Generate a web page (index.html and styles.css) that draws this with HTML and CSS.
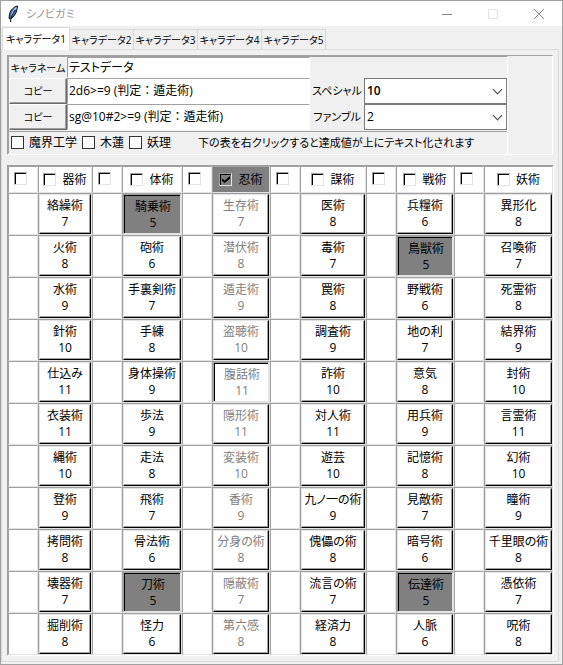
FILE: index.html
```html
<!DOCTYPE html>
<html lang="ja">
<head>
  <meta charset="UTF-8">
  <title>シノビガミ</title>
  <link rel="stylesheet" href="styles.css">
</head>
<body>

  <div class="window">
    <header class="titlebar">
      <svg class="feather" viewBox="0 0 12 18" aria-hidden="true">
        <path d="M10.500 1C7 1.500 3.500 5 2.500 9L2 13.500 3.500 14C7 12 9.500 8 10 4.500Z" fill="#3d6a9c" stroke="#111a2b" stroke-width="1"/>
        <path d="M9.500 2.500C7.500 4 5.500 7 4.500 10.500" fill="none" stroke="#a9cdf0" stroke-width="1.500"/>
        <path d="M8 5C6 8 4 11 3.500 17" fill="none" stroke="#111" stroke-width="1"/>
      </svg>
      <h1 class="title">シノビガミ</h1>
      <div class="controls">
        <button class="control" aria-label="最小化"><svg viewBox="0 0 12 12"><path d="M1 6.500H11" stroke="#888"/></svg></button>
        <button class="control" aria-label="最大化" disabled><svg viewBox="0 0 12 12"><path d="M1.500 1.500H10.500V10.500H1.500Z" stroke="#e2e2e2"/></svg></button>
        <button class="control" aria-label="閉じる"><svg viewBox="0 0 12 12"><path d="M1 1L11 11M11 1L1 11" stroke="#888"/></svg></button>
      </div>
    </header>

    <nav class="tabs" role="tablist">
      <button class="tab" role="tab" aria-selected="true">キャラデータ1</button>
      <button class="tab" role="tab" aria-selected="false">キャラデータ2</button>
      <button class="tab" role="tab" aria-selected="false">キャラデータ3</button>
      <button class="tab" role="tab" aria-selected="false">キャラデータ4</button>
      <button class="tab" role="tab" aria-selected="false">キャラデータ5</button>
    </nav>

    <main class="pane">
      <form class="profile">
        <div class="profile-inner">
          <div class="fields">
            <label class="name-label" for="name">キャラネーム</label>
            <input class="entry" id="name" type="text" value="テストデータ">
            <span></span>
            <span></span>
            <button class="copy" type="button">コピー</button>
            <input class="entry formula" type="text" value="2d6&gt;=9 (判定：遁走術)" aria-label="判定式">
            <label class="combo-label" for="special">スペシャル</label>
            <div class="combo"><select class="combo-bold" id="special"><option>10</option><option>11</option><option>12</option></select></div>
            <button class="copy" type="button">コピー</button>
            <input class="entry formula" type="text" value="sg@10#2&gt;=9 (判定：遁走術)" aria-label="コマンド">
            <label class="combo-label" for="fumble">ファンブル</label>
            <div class="combo"><select id="fumble"><option>2</option><option>3</option><option>4</option></select></div>
          </div>
          <div class="options">
            <label class="option"><input class="check" type="checkbox">魔界工学</label>
            <label class="option"><input class="check" type="checkbox">木蓮</label>
            <label class="option"><input class="check" type="checkbox">妖理</label>
            <span class="hint">下の表を右クリックすると達成値が上にテキスト化されます</span>
          </div>
        </div>
      </form>

      <table class="skills">
        <colgroup>
          <col class="gap"><col class="c1"><col class="gap"><col class="c2"><col class="gap"><col class="c3">
          <col class="gap"><col class="c4"><col class="gap"><col class="c5"><col class="gap"><col class="c6">
        </colgroup>
        <thead>
          <tr>
            <th><input class="box" type="checkbox" aria-label="妖術と器術の間"></th>
            <th><label class="field"><input class="box" type="checkbox">器術</label></th>
            <th><input class="box" type="checkbox" aria-label="器術と体術の間"></th>
            <th><label class="field"><input class="box" type="checkbox">体術</label></th>
            <th><input class="box" type="checkbox" aria-label="体術と忍術の間"></th>
            <th class="lost"><label class="field"><input class="box" type="checkbox" checked>忍術</label></th>
            <th><input class="box" type="checkbox" aria-label="忍術と謀術の間"></th>
            <th><label class="field"><input class="box" type="checkbox">謀術</label></th>
            <th><input class="box" type="checkbox" aria-label="謀術と戦術の間"></th>
            <th><label class="field"><input class="box" type="checkbox">戦術</label></th>
            <th><input class="box" type="checkbox" aria-label="戦術と妖術の間"></th>
            <th><label class="field"><input class="box" type="checkbox">妖術</label></th>
          </tr>
        </thead>
        <tbody>
          <tr>
            <td></td><td><button class="skill">絡繰術<br>7</button></td>
            <td></td><td><button class="skill learned">騎乗術<br>5</button></td>
            <td></td><td><button class="skill" disabled>生存術<br>7</button></td>
            <td></td><td><button class="skill">医術<br>8</button></td>
            <td></td><td><button class="skill">兵糧術<br>6</button></td>
            <td></td><td><button class="skill">異形化<br>8</button></td>
          </tr>
          <tr>
            <td></td><td><button class="skill">火術<br>8</button></td>
            <td></td><td><button class="skill">砲術<br>6</button></td>
            <td></td><td><button class="skill" disabled>潜伏術<br>8</button></td>
            <td></td><td><button class="skill">毒術<br>7</button></td>
            <td></td><td><button class="skill learned">鳥獣術<br>5</button></td>
            <td></td><td><button class="skill">召喚術<br>7</button></td>
          </tr>
          <tr>
            <td></td><td><button class="skill">水術<br>9</button></td>
            <td></td><td><button class="skill">手裏剣術<br>7</button></td>
            <td></td><td><button class="skill" disabled>遁走術<br>9</button></td>
            <td></td><td><button class="skill">罠術<br>8</button></td>
            <td></td><td><button class="skill">野戦術<br>6</button></td>
            <td></td><td><button class="skill">死霊術<br>8</button></td>
          </tr>
          <tr>
            <td></td><td><button class="skill">針術<br>10</button></td>
            <td></td><td><button class="skill">手練<br>8</button></td>
            <td></td><td><button class="skill" disabled>盗聴術<br>10</button></td>
            <td></td><td><button class="skill">調査術<br>9</button></td>
            <td></td><td><button class="skill">地の利<br>7</button></td>
            <td></td><td><button class="skill">結界術<br>9</button></td>
          </tr>
          <tr>
            <td></td><td><button class="skill">仕込み<br>11</button></td>
            <td></td><td><button class="skill">身体操術<br>9</button></td>
            <td></td><td><button class="skill sunken" disabled>腹話術<br>11</button></td>
            <td></td><td><button class="skill">詐術<br>10</button></td>
            <td></td><td><button class="skill">意気<br>8</button></td>
            <td></td><td><button class="skill">封術<br>10</button></td>
          </tr>
          <tr>
            <td></td><td><button class="skill">衣装術<br>11</button></td>
            <td></td><td><button class="skill">歩法<br>9</button></td>
            <td></td><td><button class="skill" disabled>隠形術<br>11</button></td>
            <td></td><td><button class="skill">対人術<br>11</button></td>
            <td></td><td><button class="skill">用兵術<br>9</button></td>
            <td></td><td><button class="skill">言霊術<br>11</button></td>
          </tr>
          <tr>
            <td></td><td><button class="skill">縄術<br>10</button></td>
            <td></td><td><button class="skill">走法<br>8</button></td>
            <td></td><td><button class="skill" disabled>変装術<br>10</button></td>
            <td></td><td><button class="skill">遊芸<br>10</button></td>
            <td></td><td><button class="skill">記憶術<br>8</button></td>
            <td></td><td><button class="skill">幻術<br>10</button></td>
          </tr>
          <tr>
            <td></td><td><button class="skill">登術<br>9</button></td>
            <td></td><td><button class="skill">飛術<br>7</button></td>
            <td></td><td><button class="skill" disabled>香術<br>9</button></td>
            <td></td><td><button class="skill">九ノ一の術<br>9</button></td>
            <td></td><td><button class="skill">見敵術<br>7</button></td>
            <td></td><td><button class="skill">瞳術<br>9</button></td>
          </tr>
          <tr>
            <td></td><td><button class="skill">拷問術<br>8</button></td>
            <td></td><td><button class="skill">骨法術<br>6</button></td>
            <td></td><td><button class="skill" disabled>分身の術<br>8</button></td>
            <td></td><td><button class="skill">傀儡の術<br>8</button></td>
            <td></td><td><button class="skill">暗号術<br>6</button></td>
            <td></td><td><button class="skill">千里眼の術<br>8</button></td>
          </tr>
          <tr>
            <td></td><td><button class="skill">壊器術<br>7</button></td>
            <td></td><td><button class="skill learned">刀術<br>5</button></td>
            <td></td><td><button class="skill" disabled>隠蔽術<br>7</button></td>
            <td></td><td><button class="skill">流言の術<br>7</button></td>
            <td></td><td><button class="skill learned">伝達術<br>5</button></td>
            <td></td><td><button class="skill">憑依術<br>7</button></td>
          </tr>
          <tr>
            <td></td><td><button class="skill">掘削術<br>8</button></td>
            <td></td><td><button class="skill">怪力<br>6</button></td>
            <td></td><td><button class="skill" disabled>第六感<br>8</button></td>
            <td></td><td><button class="skill">経済力<br>8</button></td>
            <td></td><td><button class="skill">人脈<br>6</button></td>
            <td></td><td><button class="skill">呪術<br>8</button></td>
          </tr>
        </tbody>
      </table>
    </main>
  </div>

</body>
</html>
```
FILE: styles.css
```css
:root {
  --face: #f0f0f0;
  --shadow: #a0a0a0;
  --light: #e3e3e3;
  --dark: #808080;
}

* {
  box-sizing: border-box;
}

body {
  background: var(--face);
  color: #000;
  font: 12px/16px "Open Sans", "Noto Sans CJK JP", sans-serif;
  font-feature-settings: "palt";
  margin: 0;
}

button,
input,
select {
  color: inherit;
  font: inherit;
  font-feature-settings: inherit;
  margin: 0;
}

.window {
  border: 1px solid var(--shadow);
  display: flex;
  flex-direction: column;
  min-height: 100vh;
}

/* Title bar */
.titlebar {
  align-items: center;
  background: #fff;
  display: flex;
  height: 25px;
  padding-left: 6px;
}

.feather {
  height: 18px;
  width: 12px;
}

.title {
  color: #999;
  flex: 1;
  font-size: 11px;
  font-weight: 400;
  margin: 0 0 0 7px;
}

.controls {
  display: flex;
}

.control {
  background: none;
  border: 0;
  display: grid;
  height: 24px;
  padding: 0;
  place-items: center;
  width: 46px;
}

.control svg {
  fill: none;
  height: 12px;
  width: 12px;
}

/* Tabs */
.tabs {
  align-items: flex-end;
  display: flex;
  height: 23px;
  padding-left: 1px;
}

.tab {
  background: var(--face);
  border: 1px solid #d9d9d9;
  border-bottom: 0;
  border-left: 0;
  flex: 0 0 64px;
  font-size: 10px;
  height: 20px;
  padding: 0;
  white-space: nowrap;
}

.tab[aria-selected="true"] {
  background: #fff;
  border-left: 1px solid #d9d9d9;
  flex-basis: 68px;
  height: 23px;
  margin-bottom: -1px;
  z-index: 1;
}

.pane {
  border: 1px solid #dcdcdc;
  flex: 1;
  margin: 0 3px 2px 0;
  padding: 5px;
}

/* Character form */
.profile {
  border: 1px solid;
  border-color: var(--shadow) #fff #fff var(--shadow);
  margin-bottom: 10px;
}

.profile-inner {
  border: 1px solid;
  border-color: var(--shadow) #fff var(--face) var(--shadow);
  margin-right: 44px;
}

.fields {
  align-items: stretch;
  display: grid;
  grid-template-columns: 58px 1fr 54px 143px;
  grid-template-rows: 21px 26px 26px;
}

.name-label,
.combo-label {
  align-self: center;
  font-size: 11px;
  text-align: center;
  white-space: nowrap;
}

.name-label {
  font-size: 10px;
}

.entry {
  background: #fff;
  border: 1px solid;
  border-color: var(--shadow) #fff #fff var(--shadow);
  min-width: 0;
  padding: 0 1px;
}

.formula {
  font-feature-settings: normal;
}

.copy {
  background: var(--face);
  border: 1px solid;
  border-color: #fff #696969 #696969 #fff;
  box-shadow: inset -1px -1px var(--shadow);
  font-size: 10px;
  padding: 0;
}

.combo {
  display: grid;
  position: relative;
}

.combo select {
  appearance: none;
  background: #fff;
  border: 1px solid #7a7a7a;
  border-radius: 0;
  padding: 0 2px;
}

.combo .combo-bold {
  font-weight: 600;
}

.combo::after {
  border: solid #444;
  border-width: 0 1px 1px 0;
  content: "";
  height: 6px;
  pointer-events: none;
  position: absolute;
  right: 6px;
  top: 8px;
  transform: rotate(45deg);
  width: 6px;
}

.options {
  align-items: center;
  border-top: 1px solid var(--shadow);
  display: flex;
  gap: 5px;
  height: 22px;
  margin-top: 1px;
  padding-left: 2px;
}

.option {
  align-items: center;
  display: flex;
  gap: 5px;
}

.check {
  appearance: none;
  background: #fff;
  border: 1px solid #333;
  height: 13px;
  width: 13px;
}

.hint {
  font-size: 11px;
  margin-left: 22px;
}

/* Skill table */
.skills {
  background: #fff;
  border: 1px solid;
  border-color: var(--shadow) #fff #fff var(--shadow);
  border-spacing: 0;
  table-layout: fixed;
  width: 100%;
}

.gap { width: 30px; }
.c1 { width: 54px; }
.c2 { width: 60px; }
.c3 { width: 58px; }
.c4 { width: 66px; }
.c5 { width: 58px; }
.c6 { width: 69px; }

.skills th,
.skills td {
  border: 1px solid;
  border-color: var(--shadow) var(--light) var(--light) var(--shadow);
  font-weight: 400;
  padding: 0;
}

.skills th {
  height: 27px;
  padding-right: 6px;
  vertical-align: middle;
}

.skills th:nth-child(even) {
  padding-right: 0;
}

.skills td {
  height: 42px;
}

.skills .lost {
  background: var(--dark);
}

.field {
  align-items: center;
  display: flex;
  gap: 6px;
  justify-content: center;
}

.box {
  appearance: none;
  background: #fff;
  border: 1px solid;
  border-color: var(--shadow) var(--light) var(--light) var(--shadow);
  box-shadow: inset 1px 1px #000;
  display: inline-grid;
  height: 13px;
  place-items: center;
  vertical-align: top;
  width: 13px;
}

.box:checked {
  background: var(--dark);
}

.box:checked::before {
  background: #000;
  clip-path: polygon(0 35%, 35% 65%, 100% 0, 100% 35%, 35% 100%, 0 70%);
  content: "";
  height: 7px;
  width: 8px;
}

.skill {
  background: #fff;
  border: 1px solid;
  border-color: var(--light) #000 #000 var(--light);
  box-shadow: inset -1px -1px var(--shadow);
  display: block;
  height: 40px;
  line-height: 16px;
  padding: 0 0 1px;
  white-space: nowrap;
  width: 100%;
}

.skill:disabled {
  color: #808080;
}

.skill.learned,
.skill.sunken {
  border-color: var(--shadow) var(--light) var(--light) var(--shadow);
  box-shadow: inset 1px 1px #000;
  padding: 1px 0 0 2px;
}

.skill.learned {
  background: var(--dark);
}
```
